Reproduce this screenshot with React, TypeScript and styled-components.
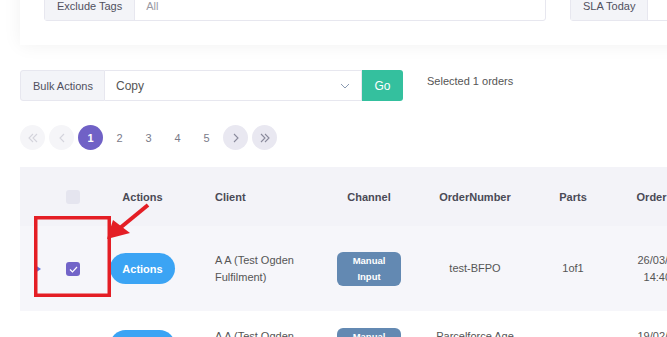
import React from 'react'
import styled, { createGlobalStyle } from 'styled-components'

const GlobalStyle = createGlobalStyle`
  html, body {
    margin: 0;
    padding: 0;
    background: #fff;
    overflow: hidden;
  }
  body {
    font-family: 'Liberation Sans', Arial, sans-serif;
    color: #555;
  }
  * { box-sizing: border-box; }
`

const Page = styled.div`
  position: relative;
  width: 667px;
  height: 337px;
  overflow: hidden;
`

// the screenshot is scrolled a little, so the filter card starts above the top edge
const Content = styled.div`
  margin-top: -34px;
  padding-left: 20px;
`

const FilterCard = styled.div`
  width: 760px;
  background: #fff;
  box-shadow: 0 0 18px rgba(0, 0, 0, 0.06);
  padding: 24px 0 24px 24px;
  display: flex;
  gap: 24px;
`

const InputGroup = styled.div<{ $width: number }>`
  display: flex;
  width: ${p => p.$width}px;
  height: 31px;
  border: 1px solid #e7e7ef;
  border-radius: 3px;
  flex-shrink: 0;
`

const Addon = styled.div`
  display: flex;
  align-items: center;
  padding: 0 12px;
  background: #f3f4f8;
  border-right: 1px solid #e7e7ef;
  font-size: 11px;
  color: #50505e;
  white-space: nowrap;
`

const Field = styled.div`
  flex: 1;
  display: flex;
  align-items: center;
  padding: 0 11px;
  font-size: 11px;
  color: #9a9aa4;
`

const BulkRow = styled.div`
  display: flex;
  align-items: flex-start;
  margin-top: 25px;
`

const BulkLabel = styled.div`
  display: flex;
  align-items: center;
  width: 85px;
  height: 31px;
  padding-left: 12px;
  background: #f3f4f8;
  border: 1px solid #e7e7ef;
  border-radius: 3px 0 0 3px;
  font-size: 11px;
  color: #50505e;
`

const Select = styled.div`
  display: flex;
  align-items: center;
  justify-content: space-between;
  width: 257px;
  height: 31px;
  padding: 0 11px 0 11px;
  border: 1px solid #e7e7ef;
  border-left: none;
  font-size: 12px;
  color: #555;
`

const GoButton = styled.button`
  width: 41px;
  height: 31px;
  border: none;
  border-radius: 0 3px 3px 0;
  background: #34c09e;
  color: #fff;
  font-family: inherit;
  font-size: 12px;
  padding: 0;
`

const SelectedText = styled.div`
  margin-left: 24px;
  padding-top: 5px;
  font-size: 11px;
  line-height: 13px;
  color: #555;
`

const Pager = styled.div`
  display: flex;
  gap: 4px;
  margin-top: 24px;
`

type PageKind = 'disabled' | 'nav' | 'active' | 'plain'

const pageBg: Record<PageKind, string> = {
  disabled: '#f5f5f8',
  nav: '#e9e8f1',
  active: '#7061c6',
  plain: 'transparent',
}

const pageFg: Record<PageKind, string> = {
  disabled: '#d6d6de',
  nav: '#8a8a9c',
  active: '#fff',
  plain: '#7a7a88',
}

const PageButton = styled.div<{ $kind: PageKind }>`
  width: 25px;
  height: 25px;
  border-radius: 50%;
  display: flex;
  align-items: center;
  justify-content: center;
  background: ${p => pageBg[p.$kind]};
  color: ${p => pageFg[p.$kind]};
  font-size: 11px;
  font-weight: ${p => (p.$kind === 'active' ? 'bold' : 'normal')};
`

const Table = styled.table`
  margin-top: 17px;
  width: 820px;
  border-collapse: collapse;
  table-layout: fixed;
`

const HeadCell = styled.th<{ $left?: boolean }>`
  height: 59px;
  padding: 0 ${p => (p.$left ? '10px 0 26px' : '10px')};
  background: #f3f3f8;
  font-size: 11px;
  font-weight: bold;
  color: #4a4a56;
  text-align: ${p => (p.$left ? 'left' : 'center')};
  white-space: nowrap;
  overflow: hidden;
`

const Row = styled.tr<{ $selected?: boolean; $height: number }>`
  height: ${p => p.$height}px;
  background: ${p => (p.$selected ? '#f6f6fa' : '#fff')};
`

const Cell = styled.td<{ $left?: boolean }>`
  padding: ${p => (p.$left ? '0 10px 0 26px' : '0 10px')};
  font-size: 11px;
  line-height: 17px;
  color: #555;
  text-align: ${p => (p.$left ? 'left' : 'center')};
  vertical-align: middle;
`

const ExpandCell = styled.td`
  padding: 0 0 0 15px;
  vertical-align: middle;
`

const ExpandCaret = styled.div`
  width: 0;
  height: 0;
  border-left: 6px solid #5b6fd8;
  border-top: 4px solid transparent;
  border-bottom: 4px solid transparent;
`

const Checkbox = styled.span<{ $checked?: boolean }>`
  display: inline-flex;
  align-items: center;
  justify-content: center;
  width: 14px;
  height: 14px;
  border-radius: 3px;
  background: ${p => (p.$checked ? '#7264c8' : '#e5e5ef')};
  vertical-align: middle;
`

const ActionButton = styled.button`
  width: 65px;
  height: 31px;
  border: none;
  border-radius: 16px;
  background: #3ba4f4;
  color: #fff;
  font-family: inherit;
  font-size: 11px;
  font-weight: bold;
  padding: 0;
  vertical-align: middle;
`

const ChannelBadge = styled.span`
  display: inline-block;
  width: 64px;
  padding: 1px 0;
  border-radius: 6px;
  background: #6389b2;
  color: #fff;
  font-size: 9.5px;
  font-weight: bold;
  line-height: 16px;
  text-align: center;
  vertical-align: middle;
`

const Annotation = styled.svg`
  position: absolute;
  left: 0;
  top: 0;
  pointer-events: none;
`

const Chevron: React.FC<{ dir: 'left' | 'right'; double?: boolean; color: string }> = ({ dir, double, color }) => {
  const pts = dir === 'left' ? ['5,1 1,5 5,9', '9,1 5,5 9,9'] : ['1,1 5,5 1,9', '5,1 9,5 5,9']
  const shown = double ? pts : [dir === 'left' ? '7,1 3,5 7,9' : '3,1 7,5 3,9']
  return (
    <svg width="10" height="10" viewBox="0 0 10 10">
      {shown.map(p => (
        <polyline key={p} points={p} fill="none" stroke={color} strokeWidth="1.1" />
      ))}
    </svg>
  )
}

const cols = [30, 46, 93, 132, 96, 116, 80, 104, 123]

const App: React.FC = () => {
  return (
    <Page>
      <GlobalStyle />
      <Content>
        <FilterCard>
          <InputGroup $width={502}>
            <Addon>Exclude Tags</Addon>
            <Field>All</Field>
          </InputGroup>
          <InputGroup $width={300}>
            <Addon>SLA Today</Addon>
            <Field />
          </InputGroup>
        </FilterCard>

        <BulkRow>
          <BulkLabel>Bulk Actions</BulkLabel>
          <Select>
            Copy
            <svg width="10" height="6" viewBox="0 0 10 6">
              <polyline points="1,1 5,5 9,1" fill="none" stroke="#8a9bb2" strokeWidth="1" />
            </svg>
          </Select>
          <GoButton>Go</GoButton>
          <SelectedText>Selected 1 orders</SelectedText>
        </BulkRow>

        <Pager>
          <PageButton $kind="disabled"><Chevron dir="left" double color="#d4d4dc" /></PageButton>
          <PageButton $kind="disabled"><Chevron dir="left" color="#d4d4dc" /></PageButton>
          <PageButton $kind="active">1</PageButton>
          {[2, 3, 4, 5].map(n => (
            <PageButton key={n} $kind="plain">{n}</PageButton>
          ))}
          <PageButton $kind="nav"><Chevron dir="right" color="#8a8a9c" /></PageButton>
          <PageButton $kind="nav"><Chevron dir="right" double color="#8a8a9c" /></PageButton>
        </Pager>

        <Table>
          <colgroup>
            {cols.map((w, i) => <col key={i} style={{ width: w }} />)}
          </colgroup>
          <thead>
            <tr>
              <HeadCell />
              <HeadCell><Checkbox /></HeadCell>
              <HeadCell>Actions</HeadCell>
              <HeadCell $left>Client</HeadCell>
              <HeadCell>Channel</HeadCell>
              <HeadCell>OrderNumber</HeadCell>
              <HeadCell>Parts</HeadCell>
              <HeadCell>Order Date</HeadCell>
              <HeadCell>Status</HeadCell>
            </tr>
          </thead>
          <tbody>
            <Row $selected $height={85}>
              <ExpandCell><ExpandCaret /></ExpandCell>
              <Cell>
                <Checkbox $checked>
                  <svg width="9" height="7" viewBox="0 0 9 7">
                    <polyline points="1,3.5 3.5,6 8,1" fill="none" stroke="#fff" strokeWidth="1.2" />
                  </svg>
                </Checkbox>
              </Cell>
              <Cell><ActionButton>Actions</ActionButton></Cell>
              <Cell $left>A A (Test Ogden Fulfilment)</Cell>
              <Cell><ChannelBadge>Manual<br />Input</ChannelBadge></Cell>
              <Cell>test-BFPO</Cell>
              <Cell>1of1</Cell>
              <Cell>26/03/2021<br />14:40:32</Cell>
              <Cell>Open</Cell>
            </Row>
            <Row $height={68}>
              <ExpandCell />
              <Cell><Checkbox /></Cell>
              <Cell><ActionButton>Actions</ActionButton></Cell>
              <Cell $left>A A (Test Ogden Fulfilment)</Cell>
              <Cell><ChannelBadge>Manual<br />Input</ChannelBadge></Cell>
              <Cell>Parcelforce Age Verification</Cell>
              <Cell>1of1</Cell>
              <Cell>19/02/2021<br />10:12:05</Cell>
              <Cell>Open</Cell>
            </Row>
          </tbody>
        </Table>
      </Content>

      <Annotation width="667" height="337" viewBox="0 0 667 337">
        <rect x="35.75" y="217.75" width="73.5" height="77.5" fill="none" stroke="#e41e25" strokeWidth="3.5" />
        <line x1="148" y1="205" x2="120" y2="228" stroke="#e41e25" strokeWidth="4" />
        <polygon points="107,239 113,220 130,233" fill="#e41e25" />
      </Annotation>
    </Page>
  )
}

export default App
